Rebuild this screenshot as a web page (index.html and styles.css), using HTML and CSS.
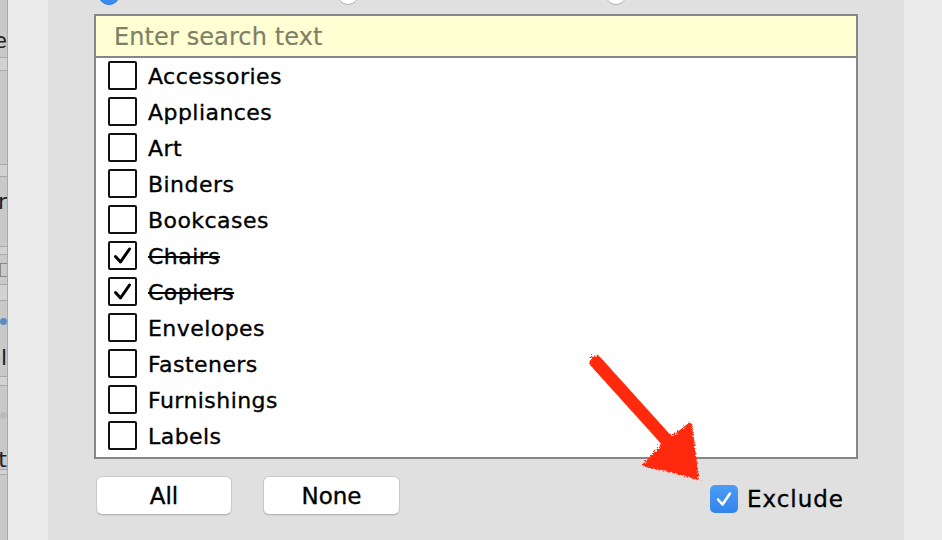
FILE: index.html
```html
<!DOCTYPE html>
<html>
<head>
<meta charset="utf-8">
<link rel="stylesheet" href="styles.css">
</head>
<body>
<div class="app">
  <div class="strip">
    <div class="s-row r1"><span>Value</span></div>
    <div class="s-line"></div>
    <div class="s-band b12"></div>
    <div class="s-line"></div>
    <div class="s-row r2"></div>
    <div class="s-line"></div>
    <div class="s-band b11"></div>
    <div class="s-line"></div>
    <div class="s-row r3"><span>Order</span></div>
    <div class="s-line"></div>
    <div class="s-band b7"></div>
    <div class="s-line"></div>
    <div class="s-row r4"><span class="s-box"></span></div>
    <div class="s-line"></div>
    <div class="s-band b15"></div>
    <div class="s-line"></div>
    <div class="s-row r5 col"><span class="dots"><i class="d1"></i><i class="d2"></i></span><span>Symbol</span></div>
    <div class="s-line"></div>
    <div class="s-band b8"></div>
    <div class="s-line"></div>
    <div class="s-row r6 col"><span class="dots"><i class="d3"></i><i class="d4"></i></span><span>Set</span></div>
    <div class="s-line"></div>
    <div class="s-band b4"></div>
    <div class="s-line"></div>
  </div>
  <div class="gutter"></div>
  <div class="panel">
    <div class="radios">
      <span class="radio on"></span>
      <span class="radio"></span>
      <span class="radio"></span>
    </div>
    <div class="listbox">
      <div class="search">Enter search text</div>
      <ul class="items">
        <li class="item"><span class="cb"></span><span class="label">Accessories</span></li>
        <li class="item"><span class="cb"></span><span class="label">Appliances</span></li>
        <li class="item"><span class="cb"></span><span class="label">Art</span></li>
        <li class="item"><span class="cb"></span><span class="label">Binders</span></li>
        <li class="item"><span class="cb"></span><span class="label">Bookcases</span></li>
        <li class="item checked"><span class="cb"><svg viewBox="0 0 25 25" width="25" height="25"><path d="M5.5 13.5 L10.5 19 L19.5 6" fill="none" stroke="#000" stroke-width="3" stroke-linecap="round" stroke-linejoin="round"/></svg></span><span class="label">Chairs</span></li>
        <li class="item checked"><span class="cb"><svg viewBox="0 0 25 25" width="25" height="25"><path d="M5.5 13.5 L10.5 19 L19.5 6" fill="none" stroke="#000" stroke-width="3" stroke-linecap="round" stroke-linejoin="round"/></svg></span><span class="label">Copiers</span></li>
        <li class="item"><span class="cb"></span><span class="label">Envelopes</span></li>
        <li class="item"><span class="cb"></span><span class="label">Fasteners</span></li>
        <li class="item"><span class="cb"></span><span class="label">Furnishings</span></li>
        <li class="item"><span class="cb"></span><span class="label">Labels</span></li>
      </ul>
    </div>
    <div class="bottom">
      <button class="btn btn-all">All</button>
      <button class="btn btn-none">None</button>
      <label class="exclude"><span class="bluecb"><svg viewBox="0 0 28 28" width="28" height="28"><path d="M8 14.5 L12.5 19.5 L20 8.5" fill="none" stroke="#fff" stroke-width="2.6" stroke-linecap="round" stroke-linejoin="round"/></svg></span><span class="ex-text">Exclude</span></label>
    </div>
  </div>
  <div class="rgutter"></div>
</div>
<svg class="arrow" width="942" height="540" viewBox="0 0 942 540">
  <defs>
    <filter id="rough" x="-10%" y="-10%" width="120%" height="120%">
      <feTurbulence type="fractalNoise" baseFrequency="0.7" numOctaves="2" seed="5" result="n"/>
      <feDisplacementMap in="SourceGraphic" in2="n" scale="6"/>
    </filter>
  </defs>
  <g filter="url(#rough)" fill="#ff2a0e" stroke="#ff2a0e">
    <path d="M596 362 L670 444" stroke-width="13" stroke-linecap="round" fill="none"/>
    <polygon points="644,465 662,446 690,424 693,442 697,478 676,472" stroke-width="3" stroke-linejoin="round"/>
  </g>
</svg>
</body>
</html>
```

FILE: styles.css
```css
* { box-sizing: border-box; }
html, body {
  margin: 0;
  padding: 0;
  width: 942px;
  height: 540px;
  overflow: hidden;
  background: #ececec;
  font-family: "DejaVu Sans", "Liberation Sans", sans-serif;
}
.app {
  display: flex;
  width: 942px;
  height: 540px;
}
.strip {
  width: 8px;
  background: #c9c9c9;
  border-right: 1px solid #a9a9a9;
  display: flex;
  flex-direction: column;
  overflow: hidden;
}
.s-row {
  display: flex;
  justify-content: flex-end;
  align-items: center;
  white-space: nowrap;
  font-size: 22px;
  line-height: 26px;
  color: #222;
  overflow: hidden;
  flex: none;
}
.s-row.col { flex-direction: column; align-items: flex-end; justify-content: flex-start; }
.r1 { height: 57px; align-items: flex-end; padding-bottom: 3px; }
.r2 { height: 93px; }
.r3 { height: 69px; align-items: flex-start; padding-top: 12px; }
.r4 { height: 29px; }
.r5 { height: 75px; padding-top: 17px; gap: 20px; }
.r6 { height: 83px; padding-top: 26px; gap: 28px; }
.s-band { flex: none; background: #d2d2d2; }
.b12 { height: 12px; }
.b11 { height: 11px; }
.b7 { height: 7px; }
.b15 { height: 15px; }
.b8 { height: 8px; }
.b4 { height: 4px; }
.s-line { height: 1px; background: #a8a8a8; flex: none; }
.s-box { width: 16px; height: 14px; border: 1px solid #888; margin-right: -8px; }
.dots { display: flex; gap: 2px; }
.dots i { display: block; width: 7px; height: 7px; border-radius: 50%; }
.d1 { background: #c9708a; }
.d2 { background: #5a8cc0; }
.d3 { background: #777; }
.d4 { background: #bbb; }
.gutter {
  width: 40px;
  background: #ececec;
}
.panel {
  width: 856px;
  background: #e0e0e0;
  display: flex;
  flex-direction: column;
}
.rgutter {
  flex: 1;
  background: #ebebeb;
}
.radios {
  display: flex;
  height: 22px;
  margin-top: -17px;
  padding-left: 50px;
}
.radio {
  width: 22px;
  height: 22px;
  border-radius: 50%;
  background: #fff;
  border: 1px solid #b3b3b3;
  flex: none;
}
.radio.on {
  background: #3b8ef0;
  border-color: #2f7fe0;
}
.radio:nth-child(2) { margin-left: 217px; }
.radio:nth-child(3) { margin-left: 246px; }
.listbox {
  margin-top: 9px;
  margin-left: 46px;
  width: 764px;
  border: 2px solid #878787;
  background: #fff;
  height: 445px;
}
.search {
  height: 42px;
  background: #ffffd4;
  border-bottom: 2px solid #878787;
  color: #7f7f66;
  font-size: 24px;
  letter-spacing: 0.1px;
  padding-left: 18px;
  padding-top: 2px;
  line-height: 38px;
  -webkit-text-stroke: 0.2px #7f7f66;
}
.items {
  list-style: none;
  margin: 0;
  padding: 0;
}
.item {
  height: 36px;
  display: flex;
  align-items: center;
  padding-left: 12px;
}
.cb {
  width: 29px;
  height: 29px;
  border: 2px solid #111;
  border-radius: 2px;
  background: #fff;
  flex: none;
  display: flex;
  align-items: center;
  justify-content: center;
  margin-top: -1px;
}
.label {
  margin-left: 11px;
  font-size: 22px;
  letter-spacing: 0.45px;
  color: #000;
  -webkit-text-stroke: 0.35px #000;
}
.checked .label { text-decoration: line-through; text-decoration-thickness: 2px; }
.bottom {
  display: flex;
  align-items: center;
  padding-left: 48px;
  padding-right: 60px;
  margin-top: 17px;
}
.btn {
  height: 39px;
  background: #fff;
  border: 1px solid #c9c9c9;
  border-bottom-color: #b5b5b5;
  border-radius: 6px;
  font-family: "DejaVu Sans", sans-serif;
  font-size: 23px;
  color: #000;
  -webkit-text-stroke: 0.35px #000;
  box-shadow: 0 1px 1px rgba(0,0,0,0.08);
  padding: 0;
}
.btn-all { width: 136px; }
.btn-none { width: 137px; margin-left: 31px; }
.exclude {
  margin-left: auto;
  display: flex;
  align-items: center;
  margin-top: 7px;
}
.bluecb {
  width: 28px;
  height: 28px;
  border-radius: 5px;
  background: linear-gradient(#4c9cf6, #3284ec);
  display: flex;
  align-items: center;
  justify-content: center;
}
.ex-text {
  margin-left: 9px;
  font-size: 23px;
  letter-spacing: 1px;
  color: #000;
  -webkit-text-stroke: 0.35px #000;
}
.arrow {
  position: absolute;
  left: 0;
  top: 0;
  pointer-events: none;
}
```
